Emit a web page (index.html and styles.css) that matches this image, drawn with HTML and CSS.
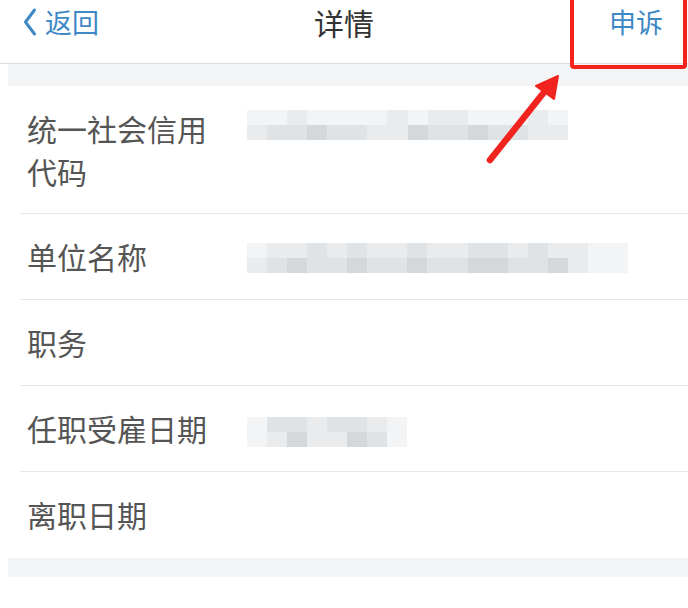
FILE: index.html
```html
<!DOCTYPE html>
<html lang="zh-CN">
<head>
<meta charset="utf-8">
<title>详情</title>
<link rel="stylesheet" href="styles.css">
</head>
<body>
<div class="page">
  <header class="nav">
    <div class="nav-left">
      <svg class="chev" width="14" height="30" viewBox="0 0 14 30"><polyline points="11.5,3 2.5,15 11.5,27" fill="none" stroke="#3e88c6" stroke-width="3" stroke-linecap="round" stroke-linejoin="round"/></svg>
      <span class="back">返回</span>
    </div>
    <div class="nav-title">详情</div>
    <div class="nav-right"><span class="action">申诉</span></div>
  </header>
  <div class="band band-top"></div>
  <ul class="list">
    <li class="row row-tall">
      <span class="label">统一社会信用代码</span>
      <span class="blur b1">
        <span class="brow"><i class="s0"></i><i class="s0"></i><i class="s1"></i><i class="s0"></i><i class="s0"></i><i class="s0"></i><i class="s0"></i><i class="s1"></i><i class="s0"></i><i class="s1"></i><i class="s1"></i><i class="s0"></i><i class="s0"></i><i class="s0"></i><i class="s1"></i><i class="s0"></i></span>
        <span class="brow"><i class="s1"></i><i class="s2"></i><i class="s2"></i><i class="s3"></i><i class="s2"></i><i class="s2"></i><i class="s1"></i><i class="s1"></i><i class="s3"></i><i class="s2"></i><i class="s2"></i><i class="s3"></i><i class="s2"></i><i class="s2"></i><i class="s1"></i><i class="s1"></i></span>
      </span>
    </li>
    <li class="row">
      <span class="label">单位名称</span>
      <span class="blur b2">
        <span class="brow"><i class="s0"></i><i class="s1"></i><i class="s1"></i><i class="s2"></i><i class="s1"></i><i class="s2"></i><i class="s1"></i><i class="s1"></i><i class="s2"></i><i class="s1"></i><i class="s1"></i><i class="s2"></i><i class="s2"></i><i class="s1"></i><i class="s2"></i><i class="s1"></i><i class="s1"></i><i class="s0"></i><i class="s0"></i></span>
        <span class="brow"><i class="s1"></i><i class="s2"></i><i class="s3"></i><i class="s2"></i><i class="s2"></i><i class="s3"></i><i class="s2"></i><i class="s2"></i><i class="s3"></i><i class="s2"></i><i class="s2"></i><i class="s3"></i><i class="s3"></i><i class="s2"></i><i class="s2"></i><i class="s3"></i><i class="s1"></i><i class="s0"></i><i class="s0"></i></span>
      </span>
    </li>
    <li class="row">
      <span class="label">职务</span>
    </li>
    <li class="row">
      <span class="label">任职受雇日期</span>
      <span class="blur b3">
        <span class="brow"><i class="s0"></i><i class="s2"></i><i class="s2"></i><i class="s1"></i><i class="s2"></i><i class="s2"></i><i class="s1"></i><i class="s0"></i></span>
        <span class="brow"><i class="s0"></i><i class="s1"></i><i class="s3"></i><i class="s1"></i><i class="s1"></i><i class="s3"></i><i class="s2"></i><i class="s0"></i></span>
      </span>
    </li>
    <li class="row row-last">
      <span class="label">离职日期</span>
    </li>
  </ul>
  <div class="band band-bottom"></div>

  <div class="highlight"></div>
  <svg class="arrow" width="688" height="608" viewBox="0 0 688 608">
    <line x1="490" y1="160" x2="545" y2="91" stroke="#f0231f" stroke-width="6.5" stroke-linecap="round"/>
    <polygon points="558,76 536,86 554,99" fill="#f0231f" stroke="#f0231f" stroke-width="2" stroke-linejoin="round"/>
  </svg>
</div>
</body>
</html>
```
FILE: styles.css
```css
* { box-sizing: border-box; }
html, body {
  margin: 0;
  padding: 0;
  background: #ffffff;
}
body {
  font-family: "Noto Sans CJK SC", "Noto Sans", sans-serif;
  width: 688px;
  height: 608px;
  overflow: hidden;
}
.page {
  position: relative;
  width: 688px;
  height: 608px;
}
.nav {
  display: grid;
  grid-template-columns: 1fr auto 1fr;
  align-items: start;
  height: 64px;
  border-bottom: 1px solid #dcdcdc;
  padding: 0 25px 0 23px;
}
.nav-left {
  display: flex;
  align-items: center;
  height: 44px;
  color: #3e88c6;
}
.chev {
  display: block;
  margin-right: 8px;
}
.back {
  font-size: 27px;
  line-height: 44px;
  color: #3e88c6;
}
.nav-title {
  font-size: 30px;
  line-height: 44px;
  color: #333333;
  padding-left: 2px;
}
.nav-right {
  display: flex;
  justify-content: flex-end;
  height: 44px;
  align-items: center;
}
.action {
  font-size: 27px;
  line-height: 44px;
  color: #3e88c6;
}
.band {
  margin-left: 8px;
  background: #f3f5f7;
}
.band-top { height: 22px; }
.band-bottom { height: 19px; }
.list {
  list-style: none;
  margin: 0;
  padding: 0;
}
.row {
  display: flex;
  align-items: flex-start;
  margin-left: 20px;
  padding: 21px 0 21px 7px;
  border-bottom: 1px solid #e6e6e6;
}
.row-tall { padding-bottom: 20px; }
.row-last { border-bottom: none; padding-bottom: 22px; }
.label {
  width: 190px;
  flex: none;
  margin-right: 30px;
  font-size: 30px;
  line-height: 43px;
  color: #555555;
}
.blur {
  display: flex;
  flex-direction: column;
  height: 30px;
  margin-top: 6px;
}
.b1 { width: 321px; margin-top: 3px; }
.b2 { width: 381px; margin-top: 8px; }
.b3 { width: 160px; margin-top: 10px; }
.brow {
  display: flex;
  flex: 1;
}
.brow i {
  flex: 1;
  display: block;
}
.s0 { background: #f2f4f5; }
.s1 { background: #e9ebed; }
.s2 { background: #e0e3e5; }
.s3 { background: #d5d8db; }
.highlight {
  position: absolute;
  left: 570px;
  top: -6px;
  width: 117px;
  height: 75px;
  border: 4px solid #f5221c;
  border-radius: 4px;
}
.arrow {
  position: absolute;
  left: 0;
  top: 0;
  pointer-events: none;
}
```
